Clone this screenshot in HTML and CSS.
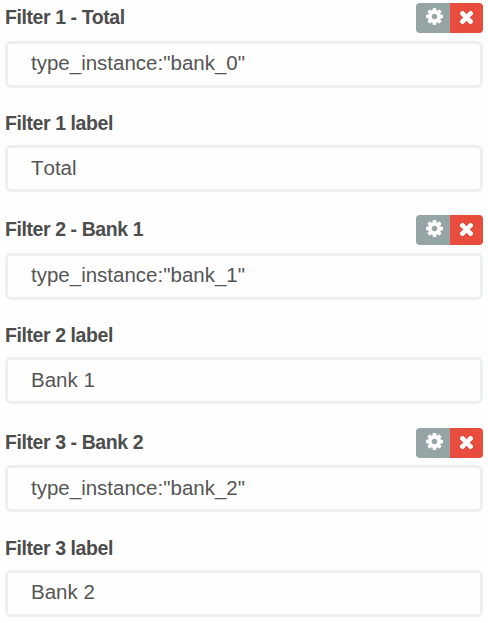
FILE: index.html
```html
<!DOCTYPE html>
<html lang="en">
  <head>
    <meta charset="UTF-8" />
    <meta name="viewport" content="width=device-width, initial-scale=1.0" />
    <title>Filters</title>
    <link rel="stylesheet" href="styles.css">
  </head>

  <body>
    <svg class="sprite">
      <symbol id="cog" viewBox="0 0 1536 1536">
        <path d="M1024 768q0-106-75-181t-181-75-181 75-75 181 75 181 181 75 181-75 75-181zm512-109v222q0 12-8 23t-20 13l-185 28q-19 54-39 91 35 50 107 138 10 12 10 25t-9 23q-27 37-99 108t-94 71q-12 0-26-9l-138-108q-44 23-91 38-16 136-29 186-7 28-36 28H657q-14 0-24.500-8.500T621 1506l-28-184q-49-16-90-37l-141 107q-10 9-25 9-14 0-25-11-126-114-165-168-7-10-7-23 0-12 8-23 15-21 51-66.500t54-70.500q-27-50-41-99L29 913q-13-2-21-12.500T0 877V655q0-12 8-23t19-13l186-28q14-46 39-92-40-57-107-138-10-12-10-24 0-10 9-23 26-36 98.500-107.500T337 135q13 0 26 10l138 107q44-23 91-38 16-136 29-186 7-28 36-28h222q14 0 24.500 8.500T915 30l28 184q49 16 90 37l142-107q9-9 24-9 13 0 25 10 129 119 165 170 7 8 7 22 0 12-8 23-15 21-51 66.500t-54 70.500q26 50 41 98l183 28q13 2 21 12.500t8 23.500z" />
      </symbol>
      <symbol id="remove" viewBox="0 0 1188 1188">
        <path d="M1188 956q0 40-28 68l-136 136q-28 28-68 28t-68-28L594 866l-294 294q-28 28-68 28t-68-28L28 1024Q0 996 0 956t28-68l294-294L28 300Q0 272 0 232t28-68L164 28q28-28 68-28t68 28l294 294L888 28q28-28 68-28t68 28l136 136q28 28 28 68t-28 68L866 594l294 294q28 28 28 68z" />
      </symbol>
    </svg>

    <form class="filters">
      <section class="filter">
        <div class="filter-head">
          <label for="query1">Filter 1 - Total</label>
          <div class="btn-group">
            <button class="btn settings" type="button" aria-label="Settings">
              <svg><use href="#cog" /></svg>
            </button>
            <button class="btn delete" type="button" aria-label="Remove">
              <svg><use href="#remove" /></svg>
            </button>
          </div>
        </div>
        <input id="query1" type="text" value="type_instance:&quot;bank_0&quot;" />
        <label class="name-label" for="name1">Filter 1 label</label>
        <input id="name1" type="text" value="Total" />
      </section>

      <section class="filter">
        <div class="filter-head">
          <label for="query2">Filter 2 - Bank 1</label>
          <div class="btn-group">
            <button class="btn settings" type="button" aria-label="Settings">
              <svg><use href="#cog" /></svg>
            </button>
            <button class="btn delete" type="button" aria-label="Remove">
              <svg><use href="#remove" /></svg>
            </button>
          </div>
        </div>
        <input id="query2" type="text" value="type_instance:&quot;bank_1&quot;" />
        <label class="name-label" for="name2">Filter 2 label</label>
        <input id="name2" type="text" value="Bank 1" />
      </section>

      <section class="filter">
        <div class="filter-head">
          <label for="query3">Filter 3 - Bank 2</label>
          <div class="btn-group">
            <button class="btn settings" type="button" aria-label="Settings">
              <svg><use href="#cog" /></svg>
            </button>
            <button class="btn delete" type="button" aria-label="Remove">
              <svg><use href="#remove" /></svg>
            </button>
          </div>
        </div>
        <input id="query3" type="text" value="type_instance:&quot;bank_2&quot;" />
        <label class="name-label" for="name3">Filter 3 label</label>
        <input id="name3" type="text" value="Bank 2" />
      </section>
    </form>
  </body>
</html>
```
FILE: styles.css
```css
* {
  margin: 0;
  padding: 0;
  box-sizing: border-box;
}

body {
  color: #4d4d4d;
  background-color: #fefefe;
  font-family: "Liberation Sans", Arial, sans-serif;
}

.sprite {
  display: none;
}

.filters {
  display: flex;
  flex-direction: column;
  gap: 23.4px;
  padding: 3px 5px 0;
}

.filter {
  display: flex;
  flex-direction: column;
}

.filter-head {
  display: flex;
  height: 37.5px;
  align-items: flex-start;
  justify-content: space-between;
}

label {
  font-size: 19.5px;
  font-weight: bold;
  line-height: 28px;
  letter-spacing: -0.42px;
}

.name-label {
  height: 36px;
  margin-top: 21.5px;
}

input {
  width: 100%;
  height: 47px;
  color: #555;
  font-family: inherit;
  font-size: 20.5px;
  font-kerning: none;
  padding: 0 23px 2px;
  border: 3px solid #ecf0f1;
  border-radius: 6px;
  outline: none;
  background-color: #fefefe;
}

.btn-group {
  display: flex;
}

.btn {
  display: flex;
  width: 33px;
  height: 30px;
  border: none;
  color: white;
  align-items: center;
  justify-content: center;
}

.btn > svg {
  fill: currentColor;
}

.settings {
  width: 34px;
  padding-left: 2px;
  border-radius: 4px 0 0 4px;
  background-color: #95a5a6;
}

.settings > svg {
  width: 17px;
  height: 17px;
  margin-bottom: 3px;
}

.delete {
  border-radius: 0 4px 4px 0;
  background-color: #e74c3c;
}

.delete > svg {
  width: 13px;
  height: 13px;
  stroke: currentColor;
  stroke-width: 60px;
  margin-bottom: 1px;
}
```
